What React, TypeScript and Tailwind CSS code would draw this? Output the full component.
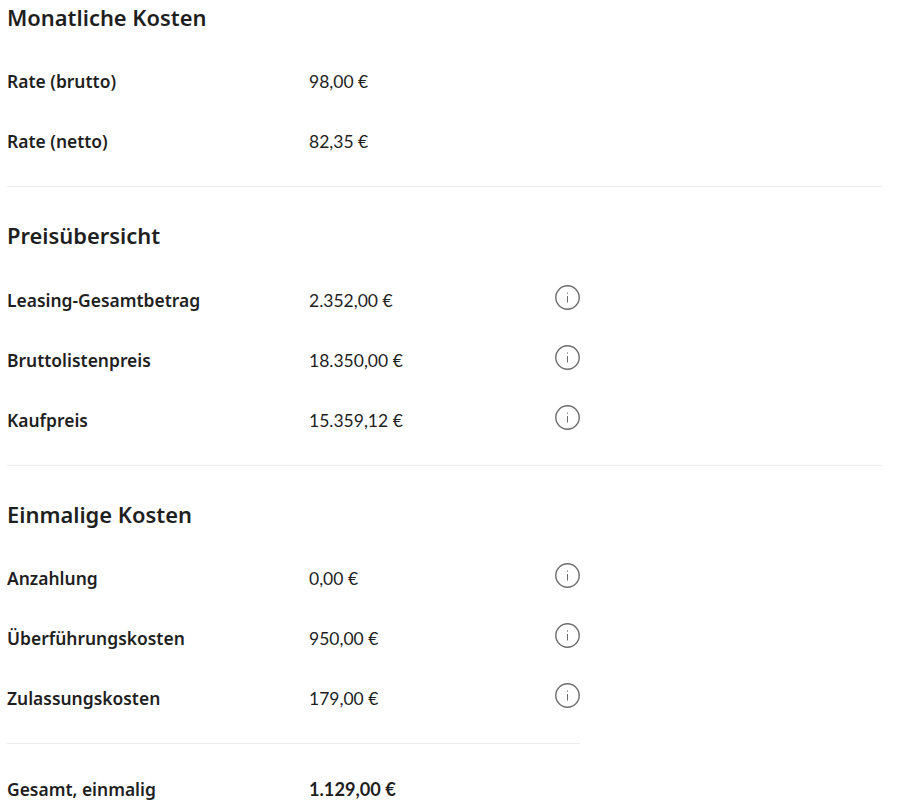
import React from "react";

type Row = { label: string; value: string; info?: boolean };

const SECTIONS: { title: string; rows: Row[]; gap: string }[] = [
  {
    title: "Monatliche Kosten",
    gap: "mt-[15px]",
    rows: [
      { label: "Rate (brutto)", value: "98,00 €" },
      { label: "Rate (netto)", value: "82,35 €" },
    ],
  },
  {
    title: "Preisübersicht",
    gap: "mt-[16px]",
    rows: [
      { label: "Leasing-Gesamtbetrag", value: "2.352,00 €", info: true },
      { label: "Bruttolistenpreis", value: "18.350,00 €", info: true },
      { label: "Kaufpreis", value: "15.359,12 €", info: true },
    ],
  },
  {
    title: "Einmalige Kosten",
    gap: "mt-[15px]",
    rows: [
      { label: "Anzahlung", value: "0,00 €", info: true },
      { label: "Überführungskosten", value: "950,00 €", info: true },
      { label: "Zulassungskosten", value: "179,00 €", info: true },
    ],
  },
];

function InfoIcon() {
  return (
    <svg width="25" height="25" viewBox="0 0 25 25" fill="none" className="block">
      <circle cx="12.5" cy="12.5" r="11.7" stroke="#6b6b6b" strokeWidth="1.4" />
      <path d="M12.5 11v6.5" stroke="#6b6b6b" strokeWidth="1" />
      <path d="M12.5 7.5v1.2" stroke="#6b6b6b" strokeWidth="1" />
    </svg>
  );
}

function CostRow({ label, value, info, strong }: Row & { strong?: boolean }) {
  return (
    <div className="flex h-[60px] items-center">
      <div className="w-[302px] font-['Noto_Sans',sans-serif] text-[17.45px] font-semibold">{label}</div>
      <div className={`w-[246px] pt-[2px] ${strong ? "text-[18.2px] font-bold" : "text-[17.5px] font-normal"}`}>
        {value}
      </div>
      {info && (
        <div className="mb-[6px]">
          <InfoIcon />
        </div>
      )}
    </div>
  );
}

export default function App() {
  return (
    <div
      className="h-[809px] overflow-hidden bg-white pl-[7px] pr-[36px] text-[#1f1f1f]"
      style={{ fontFamily: "Lato, 'Noto Sans', sans-serif" }}
    >
      {SECTIONS.map((section, i) => (
        <div key={section.title}>
          <h2
            className={`h-[36px] font-['Noto_Sans',sans-serif] text-[21.9px] leading-[36px] font-semibold ${i > 0 ? "mt-[31px]" : ""}`}
          >
            {section.title}
          </h2>
          <div className={section.gap}>
            {section.rows.map((row) => (
              <CostRow key={row.label} {...row} />
            ))}
          </div>
          {i < 2 && <div className="mt-[15px] h-px bg-[#ececec]" />}
        </div>
      ))}
      <div className="mt-[15px] h-px w-[573px] bg-[#ececec]" />
      <div className="mt-[15px]">
        <CostRow label="Gesamt, einmalig" value="1.129,00 €" strong />
      </div>
    </div>
  );
}
